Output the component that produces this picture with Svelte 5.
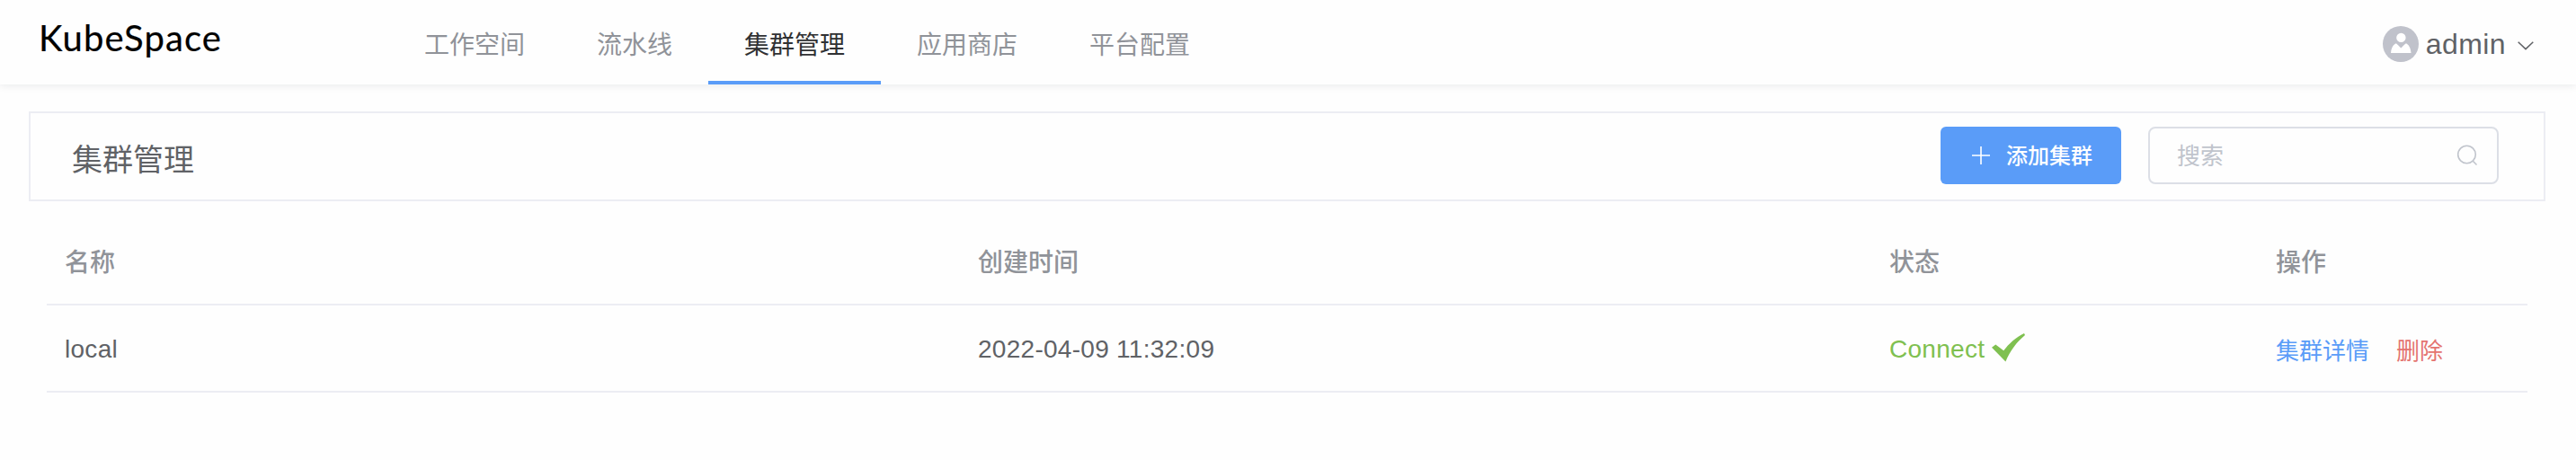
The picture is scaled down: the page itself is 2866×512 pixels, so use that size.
<script>
  const menu = ['工作空间', '流水线', '集群管理', '应用商店', '平台配置'];
  const active = '集群管理';
  const columns = ['名称', '创建时间', '状态', '操作'];
  const clusters = [{ name: 'local', created: '2022-04-09 11:32:09', status: 'Connect' }];
</script>

<header class="navbar">
  <div class="logo">KubeSpace</div>
  <nav class="menu">
    {#each menu as item}
      <a class="menu-item" class:active={item === active}>{item}</a>
    {/each}
  </nav>
  <div class="user">
    <svg class="avatar" viewBox="0 0 40 40">
      <circle cx="20" cy="20" r="20" fill="#c0c2cb" />
      <circle cx="20.400" cy="12.900" r="5.200" fill="#fff" />
      <path d="M9 30c.3-4.500 1.800-8.200 4.800-10.200.6-.4 1.300-.3 1.900.2 1.500 1.200 2.700 2.700 4.600 4.600 1.900-1.900 3.100-3.400 4.600-4.600.6-.5 1.300-.6 1.900-.2 3 2 4.400 5.700 4.700 10.200z" fill="#fff" />
    </svg>
    <span class="user-name">admin</span>
    <svg class="chevron" viewBox="0 0 18 10"><path d="M.7.800 9 8.600 17.300.8" fill="none" stroke="#606266" stroke-width="1.500" /></svg>
  </div>
</header>

<main>
  <section class="toolbar">
    <h1>集群管理</h1>
    <button class="add">
      <svg viewBox="0 0 20 20"><path d="M10 0v20M0 10h20" stroke="#fff" stroke-width="1.600" /></svg>
      <span>添加集群</span>
    </button>
    <label class="search">
      <input placeholder="搜索" />
      <svg viewBox="0 0 24 24"><circle cx="11.500" cy="11" r="9.800" /><path d="m18.300 18.200 4.200 4.300" /></svg>
    </label>
  </section>

  <section class="table">
    <div class="row head">
      {#each columns as column}
        <div class="cell">{column}</div>
      {/each}
    </div>
    {#each clusters as cluster}
      <div class="row">
        <div class="cell">{cluster.name}</div>
        <div class="cell">{cluster.created}</div>
        <div class="cell status">
          <span>{cluster.status}</span>
          <svg viewBox="0 0 37 32"><path d="M0 15.700 4.300 12.400 13.200 19.300C19 11.500 27 4.300 36 0L37 2C28 9.500 20.500 19 15.400 31.500z" fill="#7fc050" /></svg>
        </div>
        <div class="cell actions">
          <a class="detail">集群详情</a>
          <a class="delete">删除</a>
        </div>
      </div>
    {/each}
  </section>
</main>

<style>
  :global(body) {
    background: #fefefe;
    color: #606266;
    font-family: "Liberation Sans", "Noto Sans CJK SC", sans-serif;
  }
  .navbar {
    box-sizing: border-box;
    display: flex;
    height: 94px;
    padding: 0 47px 0 43px;
    box-shadow: 0 2px 8px rgba(0, 21, 41, 0.08);
  }
  .logo {
    width: 389px;
    flex: none;
    color: #000;
    font-family: Lato, sans-serif;
    font-size: 40px;
    line-height: 84px;
    letter-spacing: 1.1px;
    -webkit-text-stroke: 0.2px #000;
  }
  .menu {
    display: flex;
    flex: 1;
  }
  .menu-item {
    box-sizing: border-box;
    height: 94px;
    padding: 0 40px;
    border-bottom: 4px solid transparent;
    color: #909399;
    font-family: "Noto Sans CJK SC", sans-serif;
    font-size: 28px;
    line-height: 97px;
  }
  .menu-item.active {
    border-color: #5a9cf8;
    color: #303133;
  }
  .user {
    display: flex;
    align-items: center;
    height: 98px;
  }
  .avatar {
    width: 40px;
    height: 40px;
  }
  .user-name {
    margin: -1px 13px 0 8px;
    font-size: 32px;
    line-height: 36px;
    letter-spacing: 0.4px;
  }
  .chevron {
    width: 18px;
    height: 10px;
    margin-top: 3px;
  }
  main {
    padding: 30px 34px 0 32px;
  }
  .toolbar {
    box-sizing: border-box;
    display: flex;
    align-items: flex-start;
    height: 100px;
    padding: 15px 50px 0 46px;
    border: 2px solid #ecedf3;
  }
  h1 {
    flex: 1;
    margin: 0;
    font-family: "Noto Sans CJK SC", sans-serif;
    font-size: 34px;
    font-weight: 400;
    line-height: 69px;
  }
  .add {
    box-sizing: border-box;
    display: flex;
    align-items: center;
    width: 201px;
    height: 64px;
    margin: 0 30px 0 0;
    padding: 0 0 0 35px;
    gap: 18px;
    border: 0;
    border-radius: 6px;
    background: #5a9cf8;
    color: #fff;
    font-family: "Noto Sans CJK SC", sans-serif;
    font-size: 24px;
    font-weight: 500;
  }
  .add span {
    height: 64px;
    line-height: 61px;
  }
  .add svg {
    width: 20px;
    height: 20px;
  }
  .search {
    box-sizing: border-box;
    display: flex;
    align-items: center;
    width: 390px;
    height: 64px;
    padding: 0 21px 0 30px;
    border: 2px solid #dcdfe6;
    border-radius: 8px;
  }
  .search input {
    flex: 1;
    min-width: 0;
    height: 60px;
    padding: 0 0 3px;
    box-sizing: border-box;
    border: 0;
    background: none;
    font-family: "Noto Sans CJK SC", sans-serif;
    font-size: 26px;
  }
  .search input::placeholder {
    color: #c0c4cc;
  }
  .search svg {
    width: 24px;
    height: 24px;
    fill: none;
    stroke: #c0c4cc;
    stroke-width: 1.6;
  }
  .table {
    margin: 20px 20px 0;
  }
  .row {
    box-sizing: border-box;
    display: grid;
    grid-template-columns: 1016px 1014px 430px 1fr;
    height: 97px;
    border-bottom: 2px solid #ecedf3;
    font-size: 28px;
    line-height: 97px;
    letter-spacing: 0.28px;
  }
  .head {
    height: 96px;
    color: #909399;
    font-family: "Noto Sans CJK SC", sans-serif;
    font-weight: 500;
    line-height: 92px;
    letter-spacing: 0;
  }
  .cell {
    padding-left: 20px;
  }
  .status {
    display: flex;
    gap: 8px;
    color: #7fc050;
  }
  .status svg {
    width: 37px;
    height: 32px;
    margin-top: 31px;
  }
  .actions {
    display: flex;
    gap: 30px;
    font-family: "Noto Sans CJK SC", sans-serif;
    font-size: 26px;
    line-height: 97px;
    letter-spacing: 0;
  }
  .detail {
    color: #5a9cf8;
  }
  .delete {
    color: #e47470;
  }
</style>
